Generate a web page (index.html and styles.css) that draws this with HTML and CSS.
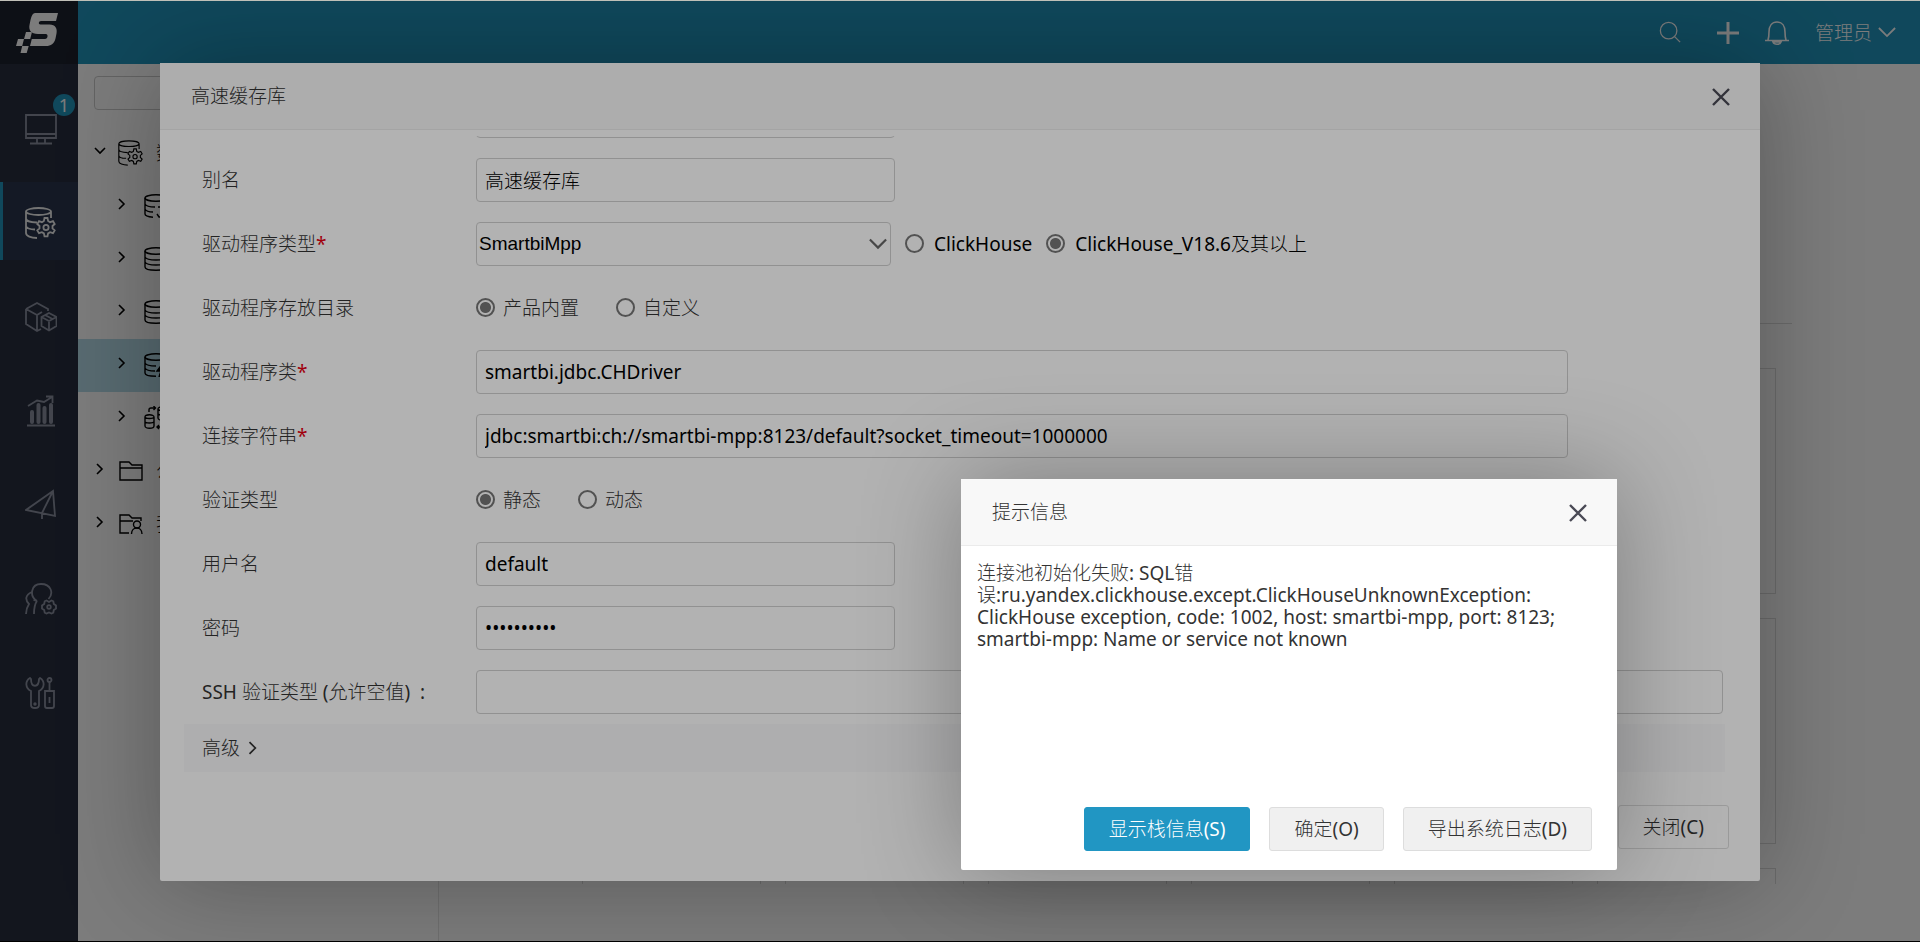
FILE: index.html
```html
<!DOCTYPE html>
<html lang="zh-CN">
<head>
<meta charset="utf-8">
<title>高速缓存库</title>
<link rel="stylesheet" href="styles.css">
</head>
<body>
<svg class="defs" aria-hidden="true">
  <symbol id="i-chev" viewBox="0 0 12 12"><path d="M3 1l5 5-5 5"/></symbol>
  <symbol id="i-down" viewBox="0 0 20 12"><path d="M1 1l9 9 9-9"/></symbol>
  <symbol id="i-close" viewBox="0 0 20 20"><path d="M2 2l16 16M18 2L2 18"/></symbol>
  <symbol id="i-dbgear" viewBox="0 0 32 32"><path d="M26 11V4.500c0-2-6-3.500-12.500-3.500S1 2.500 1 4.500V26c0 3 5 5 11 5M1 4.500C1 6.500 7 8 13.500 8S26 6.500 26 4.500M1 11.500c0 2.500 5 4 11 4M1 19c0 2 4 3.500 9 3.500"/><path d="M19.500 11h3l.6 3 2 1.200 2.900-1 1.700 2.800-2.200 2v2.400l2.200 2-1.700 2.800-2.900-1-2 1.200-.6 3h-3l-.6-3-2-1.200-2.900 1-1.700-2.800 2.200-2v-2.400l-2.200-2 1.700-2.800 2.900 1 2-1.200z"/><circle cx="21" cy="20.500" r="2.600"/></symbol>
  <symbol id="i-db" viewBox="0 0 24 24"><ellipse cx="12" cy="4" rx="11" ry="3.200"/><path d="M1 4v16c0 2 5 3.200 11 3.200S23 22 23 20V4M1 10c1 2 5 3 11 3s10-1 11-3M1 15c1 2 5 3 11 3s10-1 11-3"/></symbol>
  <symbol id="i-dbpart" viewBox="0 0 24 24"><ellipse cx="12" cy="4" rx="11" ry="3.200"/><path d="M1 4v16c0 1.500 3 2.800 8 3.200M23 4v5M1 10c1 2 5 3 10 3M1 15c1 2 4 3 8 3M13 20l2 3h5M14 13h6"/></symbol>
  <symbol id="i-dbbolt" viewBox="0 0 24 24"><ellipse cx="12" cy="4" rx="11" ry="3.200"/><path d="M1 4v16c0 2 5 3.200 11 3.200M23 4v5M1 10c1 2 5 3 11 3M1 15c1 2 5 3 10 3"/><path class="solid" d="M19 10l-6 8h4l-2 6 8-9h-4z"/></symbol>
  <symbol id="i-dbsync" viewBox="0 0 24 24"><path d="M1 11c0-3 9-3 9 0v9c0 3-9 3-9 0zM1 11c0 2 9 2 9 0M1 15.500c0 2 9 2 9 0M14 3c0-3 9-3 9 0v9c0 3-9 3-9 0zM14 3c0 2 9 2 9 0M14 7.500c0 2 9 2 9 0M5 6V4q0-2 2-2h4M9.500 0l2 2-2 2M19 17v3q0 1-1 1h-5M15 19l-2 2 2 2"/></symbol>
  <symbol id="i-folder" viewBox="0 0 24 20"><path d="M1 19V1h9l3 3h10v15zM1 7h22"/></symbol>
  <symbol id="i-folderuser" viewBox="0 0 24 20"><path d="M10 19H1V1h9l3 3h9v3M1 7h13"/><circle cx="18" cy="10.500" r="3.500"/><path d="M12.500 20c0-8 10.500-8 10.500 0"/></symbol>
</svg>

<div class="app">
  <nav class="rail">
    <a class="logo" href="#" aria-label="Smartbi">
      <svg width="44" height="42" viewBox="0 0 44 42"><path class="mark" fill-rule="evenodd" d="M21 1h23l-2 8H27c-2.500 0-3 3.500-.5 3.500h9c6 0 8 4 7 9l-1 5C40 32 37 34 32 34H16l1.800-7H31c3 0 3.500-5 .8-5H24c-7 0-9.500-4-8.500-9l1-5C17.500 3.500 19 1 21 1zM12 20h6l-1.800 7H10zM4 27h6l-1.800 7H2zM8.200 34h6.500l-2 7H6.500z"/></svg>
    </a>
    <ul class="rail-list">
      <li><a href="#" class="rail-item" aria-label="工作台"><svg width="32" height="32" viewBox="0 0 32 32"><path d="M1 2h30v23H1zM1 21h30M12 25v5M20 25v5M5 30.500h22"/></svg><span class="badge">1</span></a></li>
      <li><a href="#" class="rail-item active" aria-label="数据连接"><svg width="32" height="32"><use href="#i-dbgear"/></svg></a></li>
      <li><a href="#" class="rail-item" aria-label="数据准备"><svg width="32" height="32" viewBox="0 0 32 32"><path d="M1 8l11-6 11 6v2M1 8v15l11 7 4-2M1 8l11 6 5-3M12 14v16M24 12l7.500 4v9L24 29.500 16.500 25v-9zM16.500 16l7.500 4 7.500-4M24 20v9.500M20 14l7.500 4"/></svg></a></li>
      <li><a href="#" class="rail-item" aria-label="分析展现"><svg width="32" height="32" viewBox="0 0 32 32"><path d="M3 11l9-5.500 7 1.500 8-5M21 1.500h6.500V8M2 30.500h28"/><path class="bars" d="M7 17v10M13.500 10v17M19.500 13v14M26 10v17"/></svg></a></li>
      <li><a href="#" class="rail-item" aria-label="发布"><svg width="32" height="32" viewBox="0 0 32 32"><path d="M28 2L1 21l29 6zM28 2L17 24v6"/></svg></a></li>
      <li><a href="#" class="rail-item" aria-label="用户管理"><svg width="32" height="32" viewBox="0 0 32 32"><path d="M12 18c-8-5-6-17 4-17s13 9 7.500 15M7 9c-7 3-7 8-3 12-2 3-3 6-3 10M12 18c-3 4-3 8-3 13M8.500 17l3.500 1"/><path d="M21.500 17.500l2.500 1.500 2.500-1.500 1.800.8.500 2.700 2.200 1.500v3l-2.200 1.500-.5 2.700-1.800.8-2.500-1-2.500 1-1.800-.8-.5-2.700L17 25.500v-3l2.200-1.500.5-2.700z"/><circle cx="24" cy="24" r="1.800"/></svg></a></li>
      <li><a href="#" class="rail-item" aria-label="系统运维"><svg width="32" height="32" viewBox="0 0 32 32"><path d="M5 1c-5 3-5 10 1 13v14c0 4 8 4 8 0V14c6-3 6-10 1-13l-1 1c0 9-8 9-8 0zM20 14h9v15q0 2-2 2h-5q-2 0-2-2zM24.500 14V5M24.500 20v6"/><circle cx="24.500" cy="3" r="2"/><circle cx="10" cy="27" r=".8"/></svg></a></li>
    </ul>
  </nav>

  <div class="main">
    <header class="topbar">
      <button class="icon-btn search" aria-label="搜索"><svg width="22" height="22" viewBox="0 0 24 24"><circle cx="10.500" cy="10.500" r="9"/><path d="M17 17l6 6"/></svg></button>
      <button class="icon-btn plus" aria-label="新建"><svg width="22" height="22" viewBox="0 0 22 22"><path d="M11 0v22M0 11h22"/></svg></button>
      <button class="icon-btn bell" aria-label="通知"><svg width="26" height="26" viewBox="0 0 26 26"><path d="M1 20.500h24M4 20c1-3 1-4 1-8 0-6 3-10 8-10s8 4 8 10c0 4 0 5 1 8M9 22c1 3 7 3 8 0z"/></svg></button>
      <button class="user">管理员<svg width="18" height="11"><use href="#i-down"/></svg></button>
    </header>

    <div class="work">
      <aside class="tree">
        <input class="tree-search" type="text" aria-label="搜索资源">
        <ul class="tree-list">
          <li class="node"><svg class="arrow open" width="12" height="12"><use href="#i-chev"/></svg><svg width="26" height="26"><use href="#i-dbgear"/></svg><span>数</span></li>
          <li class="node sub"><svg class="arrow" width="12" height="12"><use href="#i-chev"/></svg><svg width="24" height="24"><use href="#i-dbpart"/></svg></li>
          <li class="node sub"><svg class="arrow" width="12" height="12"><use href="#i-chev"/></svg><svg width="24" height="24"><use href="#i-db"/></svg></li>
          <li class="node sub"><svg class="arrow" width="12" height="12"><use href="#i-chev"/></svg><svg width="24" height="24"><use href="#i-db"/></svg></li>
          <li class="node sub selected"><svg class="arrow" width="12" height="12"><use href="#i-chev"/></svg><svg width="24" height="24"><use href="#i-dbbolt"/></svg></li>
          <li class="node sub"><svg class="arrow" width="12" height="12"><use href="#i-chev"/></svg><svg width="24" height="24"><use href="#i-dbsync"/></svg></li>
          <li class="node"><svg class="arrow" width="12" height="12"><use href="#i-chev"/></svg><svg width="26" height="20"><use href="#i-folder"/></svg><span>公</span></li>
          <li class="node"><svg class="arrow" width="12" height="12"><use href="#i-chev"/></svg><svg width="26" height="20"><use href="#i-folderuser"/></svg><span>我</span></li>
        </ul>
      </aside>
      <section class="content">
        <div class="content-head"></div>
        <div class="cards">
          <div class="card"></div><div class="card"></div><div class="card"></div><div class="card"></div><div class="card"></div><div class="card"></div>
          <div class="card"></div><div class="card"></div><div class="card"></div><div class="card"></div><div class="card"></div><div class="card"></div>
          <div class="card"></div><div class="card"></div><div class="card"></div><div class="card"></div><div class="card"></div><div class="card"></div>
        </div>
      </section>
    </div>
  </div>

  <div class="mask"></div>
  <div class="dialog form-dialog" role="dialog" aria-labelledby="t1">
    <div class="dialog-head">
      <h2 id="t1">高速缓存库</h2>
      <button class="close" aria-label="关闭"><svg width="20" height="20"><use href="#i-close"/></svg></button>
    </div>
    <form class="form">
      <div class="row"><span></span><input class="text half" type="text" aria-label="名称"></div>
      <div class="row"><label for="alias">别名</label><input class="text half" id="alias" type="text" value="高速缓存库"></div>
      <div class="row"><label for="driver">驱动程序类型<em>*</em></label>
        <div class="field versions">
          <div class="select"><select id="driver"><option>SmartbiMpp</option></select><svg width="18" height="12"><use href="#i-down"/></svg></div>
          <label class="radio"><input type="radio" name="ver">ClickHouse</label>
          <label class="radio"><input type="radio" name="ver" checked>ClickHouse_V18.6及其以上</label>
        </div>
      </div>
      <div class="row"><span>驱动程序存放目录</span>
        <div class="field choices">
          <label class="radio"><input type="radio" name="dir" checked>产品内置</label>
          <label class="radio"><input type="radio" name="dir">自定义</label>
        </div>
      </div>
      <div class="row"><label for="cls">驱动程序类<em>*</em></label><input class="text wide" id="cls" type="text" value="smartbi.jdbc.CHDriver"></div>
      <div class="row"><label for="url">连接字符串<em>*</em></label><input class="text wide" id="url" type="text" value="jdbc:smartbi:ch://smartbi-mpp:8123/default?socket_timeout=1000000"></div>
      <div class="row"><span>验证类型</span>
        <div class="field choices">
          <label class="radio"><input type="radio" name="auth" checked>静态</label>
          <label class="radio"><input type="radio" name="auth">动态</label>
        </div>
      </div>
      <div class="row"><label for="user">用户名</label><input class="text half" id="user" type="text" value="default"></div>
      <div class="row"><label for="pwd">密码</label><input class="text half" id="pwd" type="password" value="smartbimpp"></div>
      <div class="row"><label for="ssh">SSH 验证类型 (允许空值)&nbsp;&nbsp;:</label><input class="text" id="ssh" type="text"></div>
      <button class="advanced" type="button">高级<svg width="14" height="14"><use href="#i-chev"/></svg></button>
    </form>
    <div class="dialog-foot"><button class="btn">关闭(C)</button></div>
  </div>

  <div class="mask"></div>
  <div class="dialog alert" role="alertdialog" aria-labelledby="t2">
    <div class="dialog-head">
      <h2 id="t2">提示信息</h2>
      <button class="close" aria-label="关闭"><svg width="20" height="20"><use href="#i-close"/></svg></button>
    </div>
    <p class="message">连接池初始化失败: SQL错误:ru.yandex.clickhouse.except.ClickHouseUnknownException: ClickHouse exception, code: 1002, host: smartbi-mpp, port: 8123; smartbi-mpp: Name or service not known</p>
    <div class="dialog-foot">
      <button class="btn primary">显示栈信息(S)</button>
      <button class="btn">确定(O)</button>
      <button class="btn">导出系统日志(D)</button>
    </div>
  </div>
</div>
</body>
</html>
```
FILE: styles.css
```css
* { box-sizing: border-box; }

body {
  margin: 0;
  background: #000;
  color: #333;
  font: 400 19px/24px "Noto Sans", "Noto Sans CJK SC Light", "Noto Sans CJK SC", sans-serif;
}

button, input, select { font: inherit; color: inherit; }
button { cursor: pointer; }
ul { list-style: none; margin: 0; padding: 0; }
svg { display: block; flex: none; fill: none; stroke: currentColor; stroke-width: 2; }
.defs { position: absolute; width: 0; height: 0; }
.solid { fill: currentColor; }

.app {
  position: relative;
  display: flex;
  height: 100vh;
  overflow: hidden;
  border-top: 1px solid #c0c0b8;
  border-bottom: 1px solid #000;
}

/* Left rail */
.rail { flex: none; width: 78px; background: #292f3f; color: #8a90a0; }
.logo {
  display: flex;
  align-items: center;
  justify-content: center;
  height: 63px;
  padding-right: 6px;
  background: #1e222e;
}
.mark { fill: #fff; stroke: none; }
.rail-list { display: flex; flex-direction: column; gap: 16px; padding-top: 24px; }
.rail-item {
  position: relative;
  display: flex;
  align-items: center;
  justify-content: center;
  height: 78px;
  padding: 4px 0 0 3px;
  color: inherit;
}
.rail-item svg { stroke-width: 1.8; }
.rail-item .bars { stroke-width: 4; stroke-linecap: round; }
.rail-item.active { background: #2b364e; box-shadow: inset 3px 0 #2195be; color: #eee; }
.badge {
  position: absolute;
  top: 6px;
  right: 3px;
  width: 22px;
  height: 22px;
  border-radius: 50%;
  background: #2195be;
  color: #fff;
  font-size: 18px;
  line-height: 22px;
  text-align: center;
}

/* Top bar */
.main { flex: 1; min-width: 0; display: flex; flex-direction: column; background: #fff; }
.topbar {
  flex: none;
  display: flex;
  align-items: center;
  justify-content: flex-end;
  height: 63px;
  padding: 0 24px;
  background: #2195be;
  color: #fff;
}
.icon-btn, .user, .close { display: flex; align-items: center; padding: 0; border: 0; background: none; }
.icon-btn { margin-right: 25px; }
.icon-btn svg { stroke-width: 1.6; }
.icon-btn.search { margin-right: 36px; padding-bottom: 2px; }
.icon-btn.search svg { stroke-width: 1.4; }
.icon-btn.plus svg { stroke-width: 3; }
.user { gap: 6px; }

/* Resource tree */
.work { flex: 1; min-height: 0; display: flex; }
.tree { flex: none; width: 361px; padding-top: 12px; border-right: 1px solid #e6e6e6; color: #000; }
.tree-search {
  display: block;
  width: 328px;
  height: 34px;
  margin: 0 16px 17px;
  border: 1px solid #ccc;
  border-radius: 4px;
  background: none;
}
.node { display: flex; align-items: center; gap: 12px; height: 53px; padding: 0 0 2px 16px; }
.node svg { stroke-width: 1.4; }
.node .arrow { stroke-width: 1.6; margin-bottom: 4px; }
.node .arrow.open { transform: rotate(90deg); }
.node.sub { gap: 16px; padding-left: 38px; }
.node.selected { background: #b5dbe8; }

/* Cards behind the dialogs */
.content { flex: 1; min-width: 0; padding: 0 128px 57px 24px; display: flex; flex-direction: column; }
.content-head { flex: none; height: 260px; border-bottom: 1px solid #ddd; }
.cards {
  flex: 1;
  display: grid;
  grid-template-columns: repeat(6, 179px);
  grid-auto-rows: 226px;
  justify-content: end;
  gap: 24px;
  padding: 44px 16px 0 0;
  overflow: hidden;
}
.card { border: 1px solid #ddd; }

/* Dialogs */
.mask { position: absolute; inset: 0; background: rgba(0, 0, 0, .3); }
.dialog {
  position: absolute;
  display: flex;
  flex-direction: column;
  border-radius: 2px;
  background: #fff;
  box-shadow: 0 0 100px rgba(0, 0, 0, .3);
}
.form-dialog { top: 62px; left: 160px; right: 160px; bottom: 60px; }
.alert { top: 478px; left: 961px; width: 656px; height: 391px; }
.dialog-head {
  flex: none;
  display: flex;
  align-items: center;
  justify-content: space-between;
  height: 67px;
  padding: 0 29px 0 31px;
  border-bottom: 1px solid #ebebeb;
  background: #f8f8f8;
}
.dialog-head h2 { margin: 0; font-size: 19px; font-weight: 400; }
.close { padding-top: 2px; color: #4a4a55; }
.close svg { stroke-width: 2.400; }

.form { flex: 1; min-height: 0; margin: 6px 35px 0 24px; overflow: hidden; }
.row {
  display: grid;
  grid-template-columns: 274px 1fr;
  align-items: center;
  height: 44px;
  margin-bottom: 20px;
  padding: 0 2px 0 18px;
}
.row:first-child { margin-top: -42px; }
.row em { color: #e60012; font-style: normal; }
.text {
  width: 100%;
  height: 44px;
  padding: 0 8px;
  border: 1px solid #d0d0d0;
  border-radius: 4px;
  background: #fff;
  color: #000;
}
.text.half { width: 419px; }
.text.wide { width: 1092px; }
.field { display: flex; align-items: center; }
.versions { gap: 14px; color: #000; }
.choices { gap: 37px; }
.select { position: relative; }
.select select {
  display: block;
  width: 415px;
  height: 44px;
  padding: 0 2px;
  border: 1px solid #d0d0d0;
  border-radius: 4px;
  background: #fff;
  color: #000;
  font-family: "Liberation Sans", sans-serif;
  appearance: none;
}
.select svg { position: absolute; right: 4px; top: 16px; color: #666; stroke-width: 2.400; pointer-events: none; }
.radio { display: flex; align-items: center; gap: 8px; }
.versions .radio { gap: 10px; }
.radio input {
  appearance: none;
  flex: none;
  width: 19px;
  height: 19px;
  margin: 0 0 2px;
  border: 2px solid #767676;
  border-radius: 50%;
}
.radio input:checked { background: radial-gradient(circle, #767676 5px, transparent 6px); }
.advanced {
  display: flex;
  align-items: center;
  gap: 6px;
  width: 100%;
  height: 48px;
  margin-top: -10px;
  padding: 0 18px;
  border: 0;
  background: #f9f9fb;
}
.advanced svg { stroke-width: 1.5; }
.dialog-foot { flex: none; display: flex; justify-content: flex-end; gap: 19px; padding: 0 25px 19px; }
.form-dialog .dialog-foot { padding: 0 31px 32px; }
.btn {
  height: 44px;
  padding: 0 24px;
  border: 1px solid #ddd;
  border-radius: 3px;
  background: #f0f0f0;
}
.form-dialog .btn { background: none; }
.btn.primary { border-color: #2196c3; background: #2196c3; color: #fff; }
.message { flex: 1; margin: 0; padding: 16px 16px 0; line-height: 22px; }
```
